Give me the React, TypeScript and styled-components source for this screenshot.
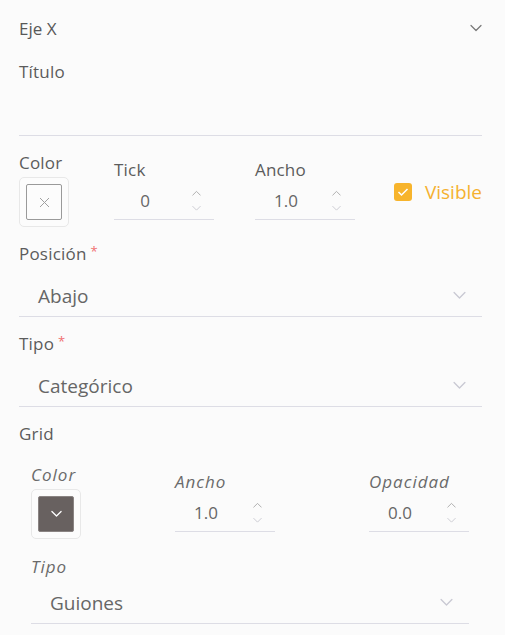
import { FC } from "react";
import styled, { createGlobalStyle } from "styled-components";

const FONT = `"Open Sans", "Liberation Sans", sans-serif`;
const LINE = "#dddde5";

const GlobalStyle = createGlobalStyle`
  html, body {
    margin: 0;
    padding: 0;
    background: #fbfbfb;
    font-family: ${FONT};
  }
`;

const Page = styled.div`
  width: 505px;
  height: 635px;
  box-sizing: border-box;
  padding: 0 23px 0 19px;
  display: flex;
  flex-direction: column;
  overflow: hidden;
`;

const Header = styled.div`
  height: 56px;
  display: flex;
  align-items: center;
  justify-content: space-between;
  font-size: 17px;
  color: #585858;
`;

const Label = styled.div<{ $italic?: boolean }>`
  height: 24px;
  line-height: 24px;
  font-size: 17px;
  color: ${({ $italic }) => ($italic ? "#6a6a6a" : "#5c5c5c")};
  font-style: ${({ $italic }) => ($italic ? "italic" : "normal")};
  letter-spacing: ${({ $italic }) => ($italic ? "1px" : "0.2px")};
  white-space: nowrap;
`;

const Required = styled.span`
  color: #f07070;
  font-size: 13px;
  vertical-align: top;
  margin-left: 4px;
  line-height: 18px;
`;

const Field = styled.div<{ $top: number }>`
  margin-top: ${({ $top }) => $top}px;
  display: flex;
  flex-direction: column;
`;

const TextInput = styled.div`
  height: 51px;
  border-bottom: 1px solid ${LINE};
`;

const SelectBox = styled.div<{ $height: number; $pad: number }>`
  height: ${({ $height }) => $height}px;
  box-sizing: border-box;
  padding: ${({ $pad }) => $pad}px 16px 0 19px;
  display: flex;
  align-items: center;
  justify-content: space-between;
  border-bottom: 1px solid ${LINE};
  font-size: 19px;
  color: #666;
`;

const Row = styled.div<{ $top: number }>`
  margin-top: ${({ $top }) => $top}px;
  display: flex;
  align-items: flex-start;
`;

const GridBlock = styled.div`
  padding: 0 13px 0 12px;
  display: flex;
  flex-direction: column;
`;

const GridRow = styled.div`
  margin-top: 17px;
  display: flex;
  align-items: flex-start;
  justify-content: space-between;
`;

const ColorCol = styled.div<{ $left?: number }>`
  display: flex;
  flex-direction: column;
  margin-left: ${({ $left }) => $left ?? 0}px;
`;

const Swatch = styled.div`
  margin-top: 2px;
  width: 50px;
  height: 50px;
  box-sizing: border-box;
  border: 1px solid #e8e8e8;
  border-radius: 5px;
  display: flex;
  align-items: center;
  justify-content: center;
  background: #fcfcfc;
`;

const SwatchInner = styled.div<{ $fill?: string }>`
  width: 36px;
  height: 36px;
  box-sizing: border-box;
  border: 1px solid ${({ $fill }) => ($fill ? "#8a8483" : "#9a9a9a")};
  border-radius: 2px;
  background: ${({ $fill }) => $fill ?? "transparent"};
  display: flex;
  align-items: center;
  justify-content: center;
`;

const NumberCol = styled.div<{ $left?: number }>`
  display: flex;
  flex-direction: column;
  width: 100px;
  padding-top: 7px;
  margin-left: ${({ $left }) => $left ?? 0}px;
`;

const NumberBox = styled.div`
  height: 37px;
  display: flex;
  align-items: center;
  border-bottom: 1px solid ${LINE};
`;

const NumberValue = styled.div`
  width: 62px;
  text-align: center;
  font-size: 17px;
  color: #666;
`;

const Spinner = styled.div`
  margin-left: 10px;
  width: 20px;
  display: flex;
  flex-direction: column;
  align-items: center;
  gap: 8px;
`;

const CheckWrap = styled.label`
  margin-left: 39px;
  margin-top: 29px;
  height: 24px;
  display: flex;
  align-items: center;
  gap: 13px;
  font-size: 19px;
  color: #f5b130;
`;

const CheckBox = styled.span`
  width: 18px;
  height: 18px;
  border-radius: 3px;
  background: #f7b42c;
  display: flex;
  align-items: center;
  justify-content: center;
`;

const Chevron: FC<{ size: number; color: string; up?: boolean; stroke?: number }> = ({
  size,
  color,
  up,
  stroke = 1.2,
}) => (
  <svg width={size} height={size / 2 + 2} viewBox="0 0 12 7" fill="none">
    <path
      d={up ? "M1 6L6 1L11 6" : "M1 1L6 6L11 1"}
      stroke={color}
      strokeWidth={stroke}
      strokeLinecap="round"
      strokeLinejoin="round"
    />
  </svg>
);

const NumberField: FC<{ label: string; value: string; left?: number; italic?: boolean }> = ({
  label,
  value,
  left,
  italic,
}) => (
  <NumberCol $left={left}>
    <Label $italic={italic}>{label}</Label>
    <NumberBox>
      <NumberValue>{value}</NumberValue>
      <Spinner>
        <Chevron size={9} color="#a8a8a8" up />
        <Chevron size={9} color="#c8c8d0" />
      </Spinner>
    </NumberBox>
  </NumberCol>
);

const App: FC = () => (
  <>
    <GlobalStyle />
    <Page>
      <Header>
        <span>Eje X</span>
        <Chevron size={12} color="#777" />
      </Header>

      <Field $top={4}>
        <Label>Título</Label>
        <TextInput />
      </Field>

      <Row $top={15}>
        <ColorCol>
          <Label>Color</Label>
          <Swatch>
            <SwatchInner>
              <svg width="11" height="11" viewBox="0 0 11 11">
                <path d="M1 1L10 10M10 1L1 10" stroke="#a0a0a0" strokeWidth="1" />
              </svg>
            </SwatchInner>
          </Swatch>
        </ColorCol>
        <NumberField label="Tick" value="0" left={45} />
        <NumberField label="Ancho" value="1.0" left={41} />
        <CheckWrap>
          <CheckBox>
            <svg width="12" height="10" viewBox="0 0 12 10">
              <path d="M1.5 5L4.5 8L10.5 2" stroke="#fff" strokeWidth="1.5" fill="none" />
            </svg>
          </CheckBox>
          Visible
        </CheckWrap>
      </Row>

      <Field $top={15}>
        <Label>
          Posición<Required>*</Required>
        </Label>
        <SelectBox $height={51} $pad={9}>
          <span>Abajo</span>
          <Chevron size={13} color="#c8c8d2" />
        </SelectBox>
      </Field>

      <Field $top={15}>
        <Label>
          Tipo<Required>*</Required>
        </Label>
        <SelectBox $height={51} $pad={9}>
          <span>Categórico</span>
          <Chevron size={13} color="#c8c8d2" />
        </SelectBox>
      </Field>

      <Field $top={15}>
        <Label>Grid</Label>
      </Field>

      <GridBlock>
        <GridRow>
          <ColorCol>
            <Label $italic>Color</Label>
            <Swatch>
              <SwatchInner $fill="#686160">
                <Chevron size={11} color="#fff" stroke={1.4} />
              </SwatchInner>
            </Swatch>
          </ColorCol>
          <NumberField label="Ancho" value="1.0" italic />
          <NumberField label="Opacidad" value="0.0" italic />
        </GridRow>

        <Field $top={16}>
          <Label $italic>Tipo</Label>
          <SelectBox $height={45} $pad={3}>
            <span>Guiones</span>
            <Chevron size={13} color="#c8c8d2" />
          </SelectBox>
        </Field>
      </GridBlock>
    </Page>
  </>
);

export default App;
